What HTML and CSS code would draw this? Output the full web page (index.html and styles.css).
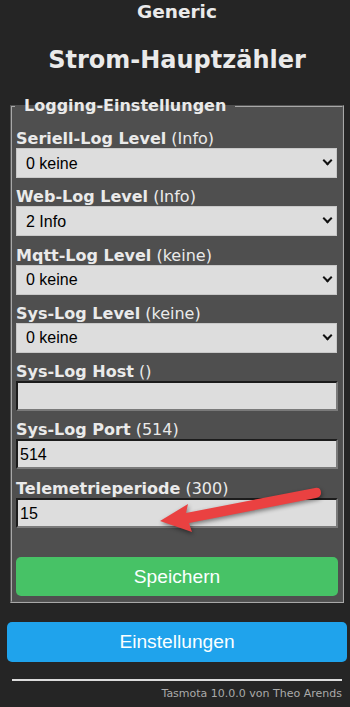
FILE: index.html
```html
<!DOCTYPE html>
<html lang="de">
  <head>
    <meta charset="UTF-8" />
    <meta name="viewport" content="width=device-width, initial-scale=1.0" />
    <title>Strom-Hauptzähler - Logging</title>
    <link rel="stylesheet" href="styles.css">
  </head>
  <body>
    <div class="page">
      <h3 class="module">Generic</h3>
      <h2 class="device">Strom-Hauptzähler</h2>

      <fieldset class="box">
        <legend>Logging-Einstellungen</legend>
        <form class="fields">
          <div class="field">
            <label><b>Seriell-Log Level</b> (Info)</label>
            <div class="select-wrap">
              <select>
                <option selected>0 keine</option>
                <option>1 Fehler</option>
                <option>2 Info</option>
              </select>
            </div>
          </div>
          <div class="field">
            <label><b>Web-Log Level</b> (Info)</label>
            <div class="select-wrap">
              <select>
                <option>0 keine</option>
                <option>1 Fehler</option>
                <option selected>2 Info</option>
              </select>
            </div>
          </div>
          <div class="field">
            <label><b>Mqtt-Log Level</b> (keine)</label>
            <div class="select-wrap">
              <select>
                <option selected>0 keine</option>
                <option>1 Fehler</option>
                <option>2 Info</option>
              </select>
            </div>
          </div>
          <div class="field">
            <label><b>Sys-Log Level</b> (keine)</label>
            <div class="select-wrap">
              <select>
                <option selected>0 keine</option>
                <option>1 Fehler</option>
                <option>2 Info</option>
              </select>
            </div>
          </div>
          <div class="field">
            <label><b>Sys-Log Host</b> ()</label>
            <input type="text" value="">
          </div>
          <div class="field">
            <label><b>Sys-Log Port</b> (514)</label>
            <input type="text" value="514">
          </div>
          <div class="field">
            <label><b>Telemetrieperiode</b> (300)</label>
            <input type="text" value="15">
          </div>
          <button type="button" class="btn btn-save">Speichern</button>
        </form>
      </fieldset>

      <button type="button" class="btn btn-menu">Einstellungen</button>

      <hr class="rule">
      <div class="footer">Tasmota 10.0.0 von Theo Arends</div>
    </div>

    <!-- annotation arrow drawn over the screenshot -->
    <svg class="arrow" width="350" height="707" viewBox="0 0 350 707">
      <path d="M160,521 L188,504 L186,513 L315,488 Q321,487 321,493 Q321,497 316,498 L189,523 L192,532 Z" fill="#ea4141" />
    </svg>
  </body>
</html>
```

FILE: styles.css
```css
body {
  margin: 0;
  background: #252525;
  color: #eaeaea;
  font-family: "DejaVu Sans", Verdana, sans-serif;
  font-size: 16px;
}

.page {
  width: 340px;
  margin-left: 7px;
}

.module {
  margin: 0;
  text-align: center;
  font-size: 18.5px;
  line-height: 24px;
}

.device {
  margin: 21px 0 0;
  text-align: center;
  font-size: 24px;
  line-height: 30px;
}

.box {
  margin: 21px 3px 0;
  padding: 14px 4px 5px;
  background: #4f4f4f;
  border: 2px groove #a8a8a8;
}

.box legend {
  margin-left: -1px;
  padding: 0 9px;
  font-weight: bold;
  line-height: 20px;
}

.fields {
  display: flex;
  flex-direction: column;
  gap: 10.3px;
}

.field label {
  display: block;
  line-height: 18px;
}

.select-wrap {
  position: relative;
}

.select-wrap::after {
  content: "";
  position: absolute;
  right: 7px;
  top: 9px;
  width: 5px;
  height: 5px;
  border-right: 2px solid #111;
  border-bottom: 2px solid #111;
  transform: rotate(45deg);
  pointer-events: none;
}

select,
input {
  display: block;
  box-sizing: border-box;
  width: 100%;
  height: 30px;
  margin: 0;
  background: #dddddd;
  color: #000;
  font-family: "Liberation Sans", Arial, sans-serif;
  font-size: 16px;
  border-radius: 0;
  outline: none;
}

select {
  width: 321px;
  padding: 0 0 0 9px;
  border: 1px solid #c8c8c8;
  appearance: none;
}

input {
  width: 322px;
  padding: 2px 2px 0;
  border-style: solid;
  border-width: 2px;
  border-color: #1c1c1c #7a7a7a #7a7a7a #1c1c1c;
}

.btn {
  display: block;
  width: 100%;
  border: 0;
  border-radius: 5px;
  color: #faffff;
  font-family: "Liberation Sans", Arial, sans-serif;
  font-size: 19.2px;
  line-height: 39px;
  padding: 0;
  cursor: pointer;
}

.btn-save {
  width: 322px;
  margin-top: 18.7px;
  background: #47c266;
}

.btn-menu {
  margin-top: 19px;
  background: #1fa3ec;
  line-height: 40px;
}

.rule {
  margin: 17px 5px 0;
  border: 0;
  border-top: 2px solid #dcdcdc;
}

.footer {
  margin-top: 6px;
  padding-right: 5px;
  text-align: right;
  font-size: 11px;
  color: #aaa;
}

.arrow {
  position: absolute;
  top: 0;
  left: 0;
  pointer-events: none;
  filter: drop-shadow(1px 2px 2px rgba(0, 0, 0, 0.45));
}
```
